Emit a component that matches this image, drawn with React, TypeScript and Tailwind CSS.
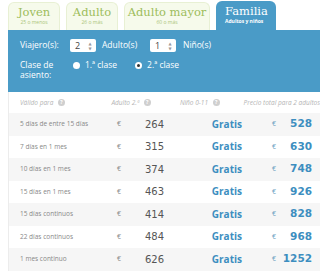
const tabs = [
  { title: 'Joven', sub: '25 o menos', w: 'w-[52px]' },
  { title: 'Adulto', sub: '26 o más', w: 'w-[52px]' },
  { title: 'Adulto mayor', sub: '60 o más', w: 'w-[86px]' },
]

const rows = [
  { label: '5 días de entre 15 días', adult: 264, total: 528 },
  { label: '7 días en 1 mes', adult: 315, total: 630 },
  { label: '10 días en 1 mes', adult: 374, total: 748 },
  { label: '15 días en 1 mes', adult: 463, total: 926 },
  { label: '15 días continuos', adult: 414, total: 828 },
  { label: '22 días continuos', adult: 484, total: 968 },
  { label: '1 mes continuo', adult: 626, total: 1252 },
]

function Info() {
  return (
    <span className="inline-flex w-[7px] h-[7px] rounded-full bg-[#cfcfcf] text-white text-[5px] leading-none items-center justify-center font-bold not-italic ml-[3px] align-middle">
      ?
    </span>
  )
}

function Spinner({ value }: { value: number }) {
  return (
    <div className="flex items-center w-[26px] h-[13px] bg-white rounded-[2px] text-[#444] text-[9px]">
      <span className="flex-1 pl-[5px] leading-none">{value}</span>
      <div className="flex flex-col items-center justify-center w-[8px] mr-[2px] text-[4px] leading-[5px] text-[#999]">
        <span>▲</span>
        <span>▼</span>
      </div>
    </div>
  )
}

export default function App() {
  return (
    <div className="w-[320px] h-[275px] overflow-hidden bg-white font-['Open_Sans','DejaVu_Sans',sans-serif]">
      <div className="flex items-end gap-[6px] pl-[8px] pt-[2px] h-[30px]">
        {tabs.map((t) => (
          <div
            key={t.title}
            className={`${t.w} h-[28px] shrink-0 rounded-t-[6px] border border-b-0 border-[#e8f0d4] bg-[#f6faeb] flex flex-col items-center pt-[3px]`}
          >
            <span className="font-['DejaVu_Serif',serif] text-[11.5px] leading-[13px] text-[#9dbd5c]">{t.title}</span>
            <span className="text-[5px] leading-[6px] text-[#abc57a]">{t.sub}</span>
          </div>
        ))}
        <div className="w-[60px] h-[29px] shrink-0 rounded-t-[6px] bg-[#4a9bc7] flex flex-col pl-[9px] pt-[4px]">
          <span className="font-['DejaVu_Serif',serif] text-[11.5px] leading-[13px] text-white">Familia</span>
          <span className="text-[5px] leading-[6px] text-white font-bold">Adultos y niños</span>
        </div>
      </div>

      <div className="ml-[8px] h-[62px] bg-[#4a9bc7] text-white text-[8.5px] px-[12px] pt-[9px]">
        <div className="flex items-center h-[13px]">
          <span className="w-[50px]">Viajero(s):</span>
          <Spinner value={2} />
          <span className="ml-[6px] w-[48px]">Adulto(s)</span>
          <Spinner value={1} />
          <span className="ml-[7px]">Niño(s)</span>
        </div>
        <div className="flex items-start mt-[8px]">
          <span className="w-[50px] leading-[10px]">
            Clase de
            <br />
            asiento:
          </span>
          <div className="flex items-center h-[10px]">
            <span className="w-[7px] h-[7px] rounded-full bg-white ml-[3px]" />
            <span className="ml-[5px]">1.ª clase</span>
            <span className="w-[7px] h-[7px] rounded-full bg-white ml-[18px] flex items-center justify-center">
              <span className="w-[3px] h-[3px] rounded-full bg-[#333]" />
            </span>
            <span className="ml-[5px]">2.ª clase</span>
          </div>
        </div>
      </div>

      <div className="ml-[8px] border-l border-[#ececec]">
        <div className="flex items-center h-[21px] text-[6.5px] italic text-[#b5b5b5] whitespace-nowrap">
          <span className="w-[96px] pl-[11px]">
            Válido para <Info />
          </span>
          <span className="w-[76px] pl-[11px]">
            Adulto 2.ª <Info />
          </span>
          <span className="w-[68px] pl-[7px]">
            Niño 0-11 <Info />
          </span>
          <span className="pl-[6px]">Precio total para 2 adultos</span>
        </div>
        {rows.map((r, i) => (
          <div
            key={r.label}
            className={`flex items-center h-[22.5px] whitespace-nowrap ${i % 2 === 0 ? 'bg-[#f6f6f6]' : 'bg-white'}`}
          >
            <span className="w-[108px] pl-[11px] text-[6.5px] text-[#888]">{r.label}</span>
            <span className="w-[10px] text-[7px] text-[#888]">€</span>
            <span className="w-[37px] text-right text-[10px] text-[#555] font-['DejaVu_Sans',sans-serif]">{r.adult}</span>
            <span className="w-[78px] text-right text-[10px] font-bold text-[#3d8ec0]">Gratis</span>
            <span className="ml-[30px] w-[8px] text-[7px] text-[#6a9ec0]">€</span>
            <span className="w-[32px] text-right text-[10.5px] font-bold text-[#3d8ec0] font-['DejaVu_Sans',sans-serif]">
              {r.total}
            </span>
          </div>
        ))}
      </div>
    </div>
  )
}
